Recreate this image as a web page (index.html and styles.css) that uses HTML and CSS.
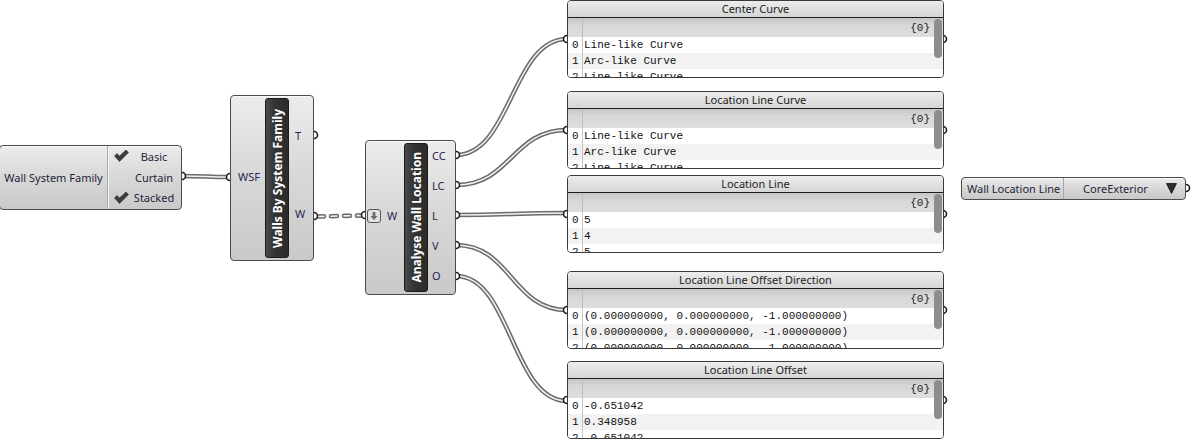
FILE: index.html
```html
<!DOCTYPE html>
<html>
<head>
<meta charset="utf-8">
<link rel="stylesheet" href="styles.css">
</head>
<body>
<div class="canvas">
  <svg class="wires" width="1191" height="439" viewBox="0 0 1191 439">
    <g class="w-out">
      <path d="M182 176 C206 176 206 177 230 177"/>
      <path d="M456 155 C511 155 512 39 567 39"/>
      <path d="M456 185 C511 185 512 130 567 130"/>
      <path d="M456 215 C511 215 512 213 567 213"/>
      <path d="M456 245 C511 245 512 310 567 310"/>
      <path d="M456 276 C511 276 512 401 567 401"/>
    </g>
    <g class="w-in">
      <path d="M182 176 C206 176 206 177 230 177"/>
      <path d="M456 155 C511 155 512 39 567 39"/>
      <path d="M456 185 C511 185 512 130 567 130"/>
      <path d="M456 215 C511 215 512 213 567 213"/>
      <path d="M456 245 C511 245 512 310 567 310"/>
      <path d="M456 276 C511 276 512 401 567 401"/>
    </g>
    <path class="d-out" d="M318 216.5 L361 215.5"/>
    <path class="d-in" d="M318 216.5 L361 215.5"/>
    <g class="grips">
      <circle cx="182" cy="176" r="3.5"/>
      <circle cx="230" cy="177" r="3.5"/>
      <circle cx="314" cy="135" r="3.5"/>
      <circle cx="314" cy="216" r="3.5"/>
      <circle cx="365" cy="215" r="3.5"/>
      <circle cx="456" cy="155" r="3.5"/>
      <circle cx="456" cy="185" r="3.5"/>
      <circle cx="456" cy="215" r="3.5"/>
      <circle cx="456" cy="245" r="3.5"/>
      <circle cx="456" cy="276" r="3.5"/>
      <circle cx="567" cy="39" r="3.5"/>
      <circle cx="943" cy="39" r="3.5"/>
      <circle cx="567" cy="130" r="3.5"/>
      <circle cx="943" cy="130" r="3.5"/>
      <circle cx="567" cy="214" r="3.5"/>
      <circle cx="943" cy="214" r="3.5"/>
      <circle cx="567" cy="310" r="3.5"/>
      <circle cx="943" cy="310" r="3.5"/>
      <circle cx="567" cy="400" r="3.5"/>
      <circle cx="943" cy="400" r="3.5"/>
      <circle cx="1186" cy="188" r="3.5"/>
    </g>
  </svg>

  <div class="node valuelist n-wsf">
    <div class="vl-name">Wall System Family</div>
    <div class="vl-items">
      <div class="vl-item">
        <svg class="check" width="15" height="12" viewBox="0 0 15 12"><path d="M0.5 6 L3 3.5 L5.5 6 L12 0 L14.5 2.5 L5.5 11.5 Z"/></svg>
        <span class="vl-text">Basic</span>
      </div>
      <div class="vl-item">
        <span class="check-blank"></span>
        <span class="vl-text">Curtain</span>
      </div>
      <div class="vl-item">
        <svg class="check" width="15" height="12" viewBox="0 0 15 12"><path d="M0.5 6 L3 3.5 L5.5 6 L12 0 L14.5 2.5 L5.5 11.5 Z"/></svg>
        <span class="vl-text">Stacked</span>
      </div>
    </div>
  </div>

  <div class="node comp n-wbsf">
    <div class="ins ins-wbsf"><div class="prm">WSF</div></div>
    <div class="bar"><span class="bar-text">Walls By System Family</span></div>
    <div class="outs outs-wbsf"><div class="prm">T</div><div class="prm">W</div></div>
  </div>

  <div class="node comp n-awl">
    <div class="ins ins-awl">
      <div class="prm prm-in">
        <svg class="flat" width="14" height="14" viewBox="0 0 14 14">
          <rect x="0.5" y="0.5" width="13" height="13" rx="2.5" class="flat-box"/>
          <path d="M5.6 3 H8.4 V7 H10.5 L7 11 L3.5 7 H5.6 Z" class="flat-arrow"/>
        </svg>
        <span>W</span>
      </div>
    </div>
    <div class="bar"><span class="bar-text">Analyse Wall Location</span></div>
    <div class="outs outs-awl">
      <div class="prm">CC</div>
      <div class="prm">LC</div>
      <div class="prm">L</div>
      <div class="prm">V</div>
      <div class="prm">O</div>
    </div>
  </div>

  <div class="panel p1">
    <div class="ptitle">Center Curve</div>
    <div class="pbody">
      <div class="phead"><span class="pidx"></span><span class="ppath">{0}</span></div>
      <div class="prow"><span class="pidx">0</span><span class="pval">Line-like Curve</span></div>
      <div class="prow alt"><span class="pidx">1</span><span class="pval">Arc-like Curve</span></div>
      <div class="prow"><span class="pidx">2</span><span class="pval">Line-like Curve</span></div>
      <div class="scroll"></div>
    </div>
  </div>

  <div class="panel p2">
    <div class="ptitle">Location Line Curve</div>
    <div class="pbody">
      <div class="phead"><span class="pidx"></span><span class="ppath">{0}</span></div>
      <div class="prow"><span class="pidx">0</span><span class="pval">Line-like Curve</span></div>
      <div class="prow alt"><span class="pidx">1</span><span class="pval">Arc-like Curve</span></div>
      <div class="prow"><span class="pidx">2</span><span class="pval">Line-like Curve</span></div>
      <div class="scroll"></div>
    </div>
  </div>

  <div class="panel p3">
    <div class="ptitle">Location Line</div>
    <div class="pbody">
      <div class="phead"><span class="pidx"></span><span class="ppath">{0}</span></div>
      <div class="prow"><span class="pidx">0</span><span class="pval">5</span></div>
      <div class="prow alt"><span class="pidx">1</span><span class="pval">4</span></div>
      <div class="prow"><span class="pidx">2</span><span class="pval">5</span></div>
      <div class="scroll"></div>
    </div>
  </div>

  <div class="panel p4">
    <div class="ptitle">Location Line Offset Direction</div>
    <div class="pbody">
      <div class="phead"><span class="pidx"></span><span class="ppath">{0}</span></div>
      <div class="prow"><span class="pidx">0</span><span class="pval">(0.000000000, 0.000000000, -1.000000000)</span></div>
      <div class="prow alt"><span class="pidx">1</span><span class="pval">(0.000000000, 0.000000000, -1.000000000)</span></div>
      <div class="prow"><span class="pidx">2</span><span class="pval">(0.000000000, 0.000000000, -1.000000000)</span></div>
      <div class="scroll"></div>
    </div>
  </div>

  <div class="panel p5">
    <div class="ptitle">Location Line Offset</div>
    <div class="pbody">
      <div class="phead"><span class="pidx"></span><span class="ppath">{0}</span></div>
      <div class="prow"><span class="pidx">0</span><span class="pval">-0.651042</span></div>
      <div class="prow alt"><span class="pidx">1</span><span class="pval">0.348958</span></div>
      <div class="prow"><span class="pidx">2</span><span class="pval">-0.651042</span></div>
      <div class="scroll"></div>
    </div>
  </div>

  <div class="node dropdown">
    <div class="dd-name">Wall Location Line</div>
    <div class="dd-value">CoreExterior</div>
    <svg class="dd-arrow" width="11" height="11" viewBox="0 0 11 11"><path d="M0.5 0.5 H10.5 L5.5 10.5 Z"/></svg>
  </div>
</div>
</body>
</html>
```

FILE: styles.css
```css
* { box-sizing: border-box; }
html, body { margin: 0; padding: 0; background: #ffffff; }
body { font-family: "Noto Sans", "Open Sans", sans-serif; font-size: 11px; color: #222; }
.canvas { position: relative; width: 1191px; height: 439px; overflow: hidden; background: #ffffff; }

.wires { position: absolute; left: 0; top: 0; z-index: 0; }
.w-out path { fill: none; stroke: #6b6b6b; stroke-width: 4.6; }
.w-in path { fill: none; stroke: #f2f2f2; stroke-width: 1.6; }
.d-out { fill: none; stroke: #6b6b6b; stroke-width: 4.6; stroke-dasharray: 6 7; stroke-linecap: round; }
.d-in { fill: none; stroke: #f2f2f2; stroke-width: 1.6; stroke-dasharray: 6 7; stroke-linecap: round; }
.grips circle { fill: #ffffff; stroke: #1e1e1e; stroke-width: 1.6; }

.node {
  position: absolute;
  z-index: 1;
  border: 1px solid #4b4b4b;
  border-radius: 4px;
  background: linear-gradient(#ececec, #d9d9d9 45%, #c9c9c9);
  box-shadow: inset 0 1px 0 #fafafa;
}

/* value list */
.n-wsf { left: -1px; top: 145px; width: 183px; height: 65px; display: flex; }
.vl-name { width: 108px; display: flex; align-items: center; justify-content: center; padding-bottom: 1px; border-right: 1px solid #a8a8a8; color: #1f1f3a; }
.vl-items { flex: 1; display: flex; flex-direction: column; padding: 0 0 1px 0; border-left: 1px solid #f4f4f4; }
.vl-item { flex: 1; display: flex; align-items: center; padding-left: 5px; }
.check { flex: none; }
.check path { fill: #3d3d3d; stroke: #2a2a2a; stroke-width: 0.6; }
.check-blank { width: 15px; flex: none; }
.vl-text { flex: 1; text-align: center; padding-right: 2px; color: #1f1f3a; }

/* components */
.comp { display: flex; }
.n-wbsf { left: 230px; top: 95px; width: 84px; height: 166px; }
.n-awl { left: 365px; top: 140px; width: 91px; height: 155px; }
.ins, .outs { display: flex; flex-direction: column; }
.prm { flex: 1; display: flex; align-items: center; color: #2a2452; }
.ins-wbsf { width: 34px; padding-bottom: 3px; }
.ins-wbsf .prm { padding-left: 7px; }
.outs-wbsf { flex: 1; padding-bottom: 8px; }
.outs-wbsf .prm { padding-left: 6px; }
.ins-awl { width: 38px; padding-bottom: 4px; }
.prm-in { padding-left: 1px; gap: 6px; }
.outs-awl { flex: 1; padding-bottom: 4px; }
.outs-awl .prm { padding-left: 4px; }

.flat-box { fill: #e2e2e2; stroke: #555; stroke-width: 1; }
.flat-arrow { fill: #6a6a6a; }

.bar {
  width: 24px;
  margin: 2px 0;
  border-radius: 3px;
  border: 1px solid #1c1c1c;
  background: linear-gradient(90deg, #4a4a4a, #333 40%, #2b2b2b);
  display: flex;
  align-items: center;
  justify-content: center;
}
.bar-text {
  writing-mode: vertical-rl;
  transform: rotate(180deg);
  color: #ffffff;
  font-weight: bold;
  font-size: 12px;
  white-space: nowrap;
}

/* panels */
.panel {
  position: absolute;
  z-index: 1;
  left: 567px;
  width: 377px;
  height: 78px;
  border: 1px solid #3a3a3a;
  border-radius: 4px;
  background: #ffffff;
  overflow: hidden;
  display: flex;
  flex-direction: column;
}
.p1 { top: 0; }
.p2 { top: 91px; }
.p3 { top: 175px; }
.p4 { top: 271px; }
.p5 { top: 361px; }
.ptitle {
  height: 17px;
  flex: none;
  border-bottom: 1px solid #1e1e1e;
  background: linear-gradient(#ececec, #d6d6d6);
  text-align: center;
  line-height: 16px;
  color: #222;
}
.pbody { position: relative; flex: 1; overflow: hidden; font-family: "Liberation Mono", "Courier New", monospace; font-size: 11px; color: #111; }
.phead { height: 19px; display: flex; background: linear-gradient(#c6c6c6, #d8d8d8 40%, #dddddd); }
.prow { height: 16px; display: flex; background: #ffffff; }
.prow.alt { background: #f2f2f2; }
.pidx { width: 15px; flex: none; border-right: 1px solid #c4c4c4; padding-left: 4px; line-height: 16px; }
.phead .pidx { border-right-color: #bdbdbd; }
.pval { padding-left: 1px; line-height: 16px; white-space: nowrap; }
.ppath { flex: 1; text-align: right; padding-right: 13px; line-height: 20px; color: #222; }
.scroll { position: absolute; right: 1px; top: 1px; width: 8px; height: 39px; border-radius: 4px; background: #8d8d8d; }

/* dropdown */
.dropdown { left: 961px; top: 177px; width: 225px; height: 23px; display: flex; align-items: center; }
.dd-name { width: 102px; height: 100%; display: flex; align-items: center; padding-left: 5px; border-right: 1px solid #a8a8a8; color: #1f1f3a; }
.dd-value { flex: 1; text-align: center; padding-left: 5px; color: #1f1f3a; }
.dd-arrow { margin: 0 8px 0 4px; }
.dd-arrow path { fill: #2d2d2d; stroke: #111; stroke-width: 0.8; }
```
